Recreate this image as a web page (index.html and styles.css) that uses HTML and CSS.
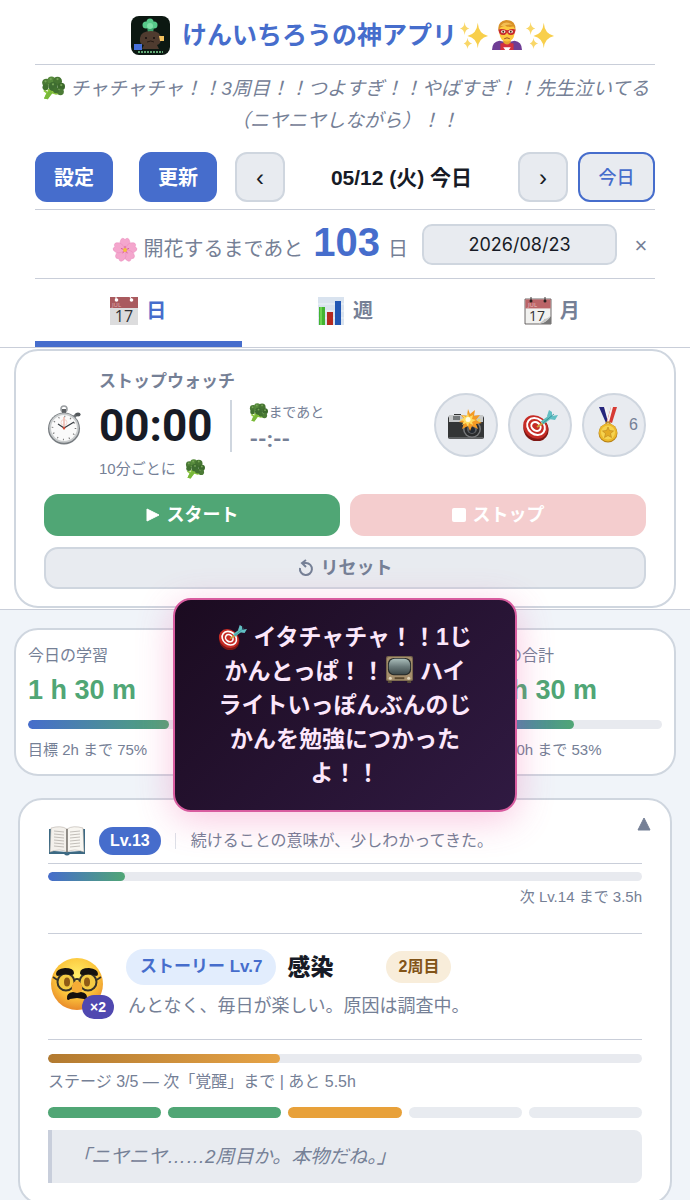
FILE: index.html
```html
<!DOCTYPE html>
<html lang="ja">
<head>
<meta charset="utf-8">
<meta name="viewport" content="width=device-width, initial-scale=1">
<title>けんいちろうの神アプリ</title>
<link rel="stylesheet" href="styles.css">
</head>
<body>
<svg class="defs" aria-hidden="true">
  <defs>
    <radialGradient id="g-face" cx=".5" cy=".35" r=".65"><stop offset="0" stop-color="#fff06a"/><stop offset=".6" stop-color="#fcc63c"/><stop offset="1" stop-color="#e8892a"/></radialGradient>
    <linearGradient id="g-screen" x1="0" y1="0" x2="0" y2="1"><stop offset="0" stop-color="#a9bcb9"/><stop offset=".5" stop-color="#6b7b7b"/><stop offset="1" stop-color="#3b4748"/></linearGradient>
    <symbol id="broccoli" viewBox="0 0 32 32">
      <path d="M9 17 20 18 25 24 20 25 14 23 9 31 4 30 7 23 3 20 5 18 9 21Z" fill="#8cc63f"/>
      <path d="m7 24 5-5 4 3-7 9-5-1z" fill="#79b93a"/>
      <circle cx="7" cy="9" r="5.500" fill="#4a7a35"/><circle cx="14" cy="6" r="5.500" fill="#568a3c"/><circle cx="22" cy="7" r="6" fill="#467532"/>
      <circle cx="27" cy="14" r="5" fill="#3c692c"/><circle cx="26" cy="21" r="4.500" fill="#4b7b36"/><circle cx="16" cy="14" r="6" fill="#3e6d31"/><circle cx="6" cy="15" r="4" fill="#41722f"/><circle cx="20" cy="19" r="4" fill="#427230"/>
      <g fill="#76a556"><circle cx="6" cy="7" r="1.500"/><circle cx="13" cy="4" r="1.500"/><circle cx="22" cy="4" r="1.500"/><circle cx="16" cy="11" r="1.500"/><circle cx="27" cy="12" r="1.500"/><circle cx="24" cy="18" r="1"/><circle cx="10" cy="12" r="1"/></g>
    </symbol>
    <symbol id="sparkles" viewBox="0 0 32 32">
      <path d="M20 3q1 12 11 14-10 2-11 13-1-11-11-13 10-2 11-14z" fill="#f8cf4b"/>
      <path d="M6 2q.5 6 5 7-4.500 1-5 7-.5-6-5-7 4.500-1 5-7zM9 19q.5 5 5 6-4.500 1-5 6-.5-5-4-6 3.500-1 4-6z" fill="#f9d768"/>
    </symbol>
    <symbol id="hero" viewBox="0 0 32 32">
      <path d="M0 32q0-9 8-10l8 2 8-2q8 1 8 10z" fill="#6f3d94"/>
      <path d="M9 32V25l7-1 7 1v7z" fill="#d3323e"/><path d="M12 29h8l-2 3h-4z" fill="#fff"/>
      <path d="M12 18h8v6q-4 4-8 0z" fill="#e6a52d"/>
      <path d="M8 9q0-6 8-6t8 6v6q-1 8-8 8t-8-8z" fill="#fdc93f"/>
      <path d="M7 12Q5 2 15 0q11 0 10 12l-2-5q-6 1-9-1-4 1-5 2z" fill="#d99227"/><path d="M9 6q5-6 13-1-7-1-9 2z" fill="#f3bf54"/>
      <path d="M7 10q4-1 9 1 5-2 9-1 0 6-5 6-3 0-4-3-1 3-4 3-5 0-5-6z" fill="#c8292f"/>
      <ellipse cx="12" cy="12.500" rx="2.400" ry="1.500" fill="#f4f0dc"/><ellipse cx="20" cy="12.500" rx="2.400" ry="1.500" fill="#f4f0dc"/><circle cx="12" cy="12.500" r="1" fill="#4b2b18"/><circle cx="20" cy="12.500" r="1" fill="#4b2b18"/>
      <path d="M13 20q3-2 6 0" stroke="#94472a" fill="none"/>
    </symbol>
    <symbol id="blossom" viewBox="0 0 32 32">
      <g fill="#f4a6cd" stroke="#e98abb" stroke-width=".6"><path id="petal" d="M16 16Q7 10 11 3q2-3 5 0 3-3 5 0 4 7-5 13z"/><use href="#petal" transform="rotate(72 16 16)"/><use href="#petal" transform="rotate(144 16 16)"/><use href="#petal" transform="rotate(216 16 16)"/><use href="#petal" transform="rotate(288 16 16)"/></g>
      <g stroke="#cf4d86" stroke-width="1"><path d="M16 16v-5M16 16l5-2M16 16l3 4M16 16l-3 4M16 16l-5-2"/></g><circle cx="16" cy="16" r="2.500" fill="#f3c03c"/>
    </symbol>
    <symbol id="calendar" viewBox="0 0 28 28">
      <path d="M0 0h28v28H0z" fill="#dcdcdd"/><path d="M0 0h28v11H0z" fill="#a95a5e"/>
      <circle cx="6.500" cy="3" r="1.800" fill="#fff"/><circle cx="21.500" cy="3" r="1.800" fill="#fff"/><path d="M6 0v3M20 0l2 3" stroke="#fff"/>
      <text x="2" y="10" font-size="6" fill="#e2b5b5" class="cal-text">JUL</text><text x="14" y="25" font-size="16" text-anchor="middle" fill="#303236" class="cal-text">17</text>
    </symbol>
    <symbol id="tearoff" viewBox="0 0 28 28">
      <path d="M1 2h26v25H1z" fill="#f1f1ef" stroke="#4a4444" stroke-width=".8"/><path d="M1.400 2.400h25.200v9H1.400z" fill="#bb6467"/>
      <path d="M7 0v4M21 0v4" stroke="#3a3535" stroke-width="1"/><circle cx="7" cy="4" r="1.500" fill="#29201f"/><circle cx="21" cy="4" r="1.500" fill="#29201f"/>
      <text x="4" y="10" font-size="6" fill="#e8c3c1" class="cal-text">JUL</text><text x="13" y="24" font-size="14" text-anchor="middle" fill="#333" class="cal-text">17</text>
      <path d="M15 27q7-1 12-8v8z" fill="#777"/><path d="M14 27q7-4 6-5 4 0 7-4-2 7-13 9z" fill="#c6c6c4"/>
    </symbol>
    <symbol id="chart" viewBox="0 0 28 28">
      <path d="M1 0h26v28H1z" fill="#d9e3ef"/><path d="M1 7h26M1 14h26M1 21h26" stroke="#eef3f8"/>
      <path d="M2 10h6v18H2z" fill="#43b431"/><path d="M10 15h6v13h-6z" fill="#b52a20"/><path d="M18 4h6v24h-6z" fill="#2257b4"/><path d="M3 10h2v18H3z" fill="#6bd24f"/>
    </symbol>
    <symbol id="stopwatch" viewBox="0 0 34 40">
      <circle cx="17" cy="4" r="3" fill="none" stroke="#9b9fa2" stroke-width="1.600"/><path d="M15 4h4v6h-4z" fill="#5e6265"/>
      <path d="m27 12 3-3" stroke="#6c7174" stroke-width="3"/><ellipse cx="31" cy="9.500" rx="2.600" ry="2" fill="#53585b"/>
      <circle cx="17" cy="23.500" r="16" fill="#777c80"/><circle cx="17" cy="23" r="14.800" fill="#c9cccd"/><circle cx="17" cy="23" r="13" fill="#fafafa"/>
      <circle cx="17" cy="23" r="11.500" fill="none" stroke="#777" stroke-width="1.600" stroke-dasharray="1 5.020"/>
      <path d="M17 25V12" stroke="#e99484" stroke-width="1"/><circle cx="17" cy="17.500" r="3" fill="none" stroke="#ecc5ba" stroke-width=".7"/>
      <path d="m11 19 6 4 10-6" stroke="#353b40" stroke-width="1.200" fill="none"/><circle cx="17" cy="23" r="1.300" fill="#cf4c36"/>
    </symbol>
    <symbol id="camera" viewBox="0 0 36 32">
      <path d="M1 7h5V5h7v2h21q2 0 2 2v19q0 2-2 2H2q-2 0-2-2V9z" fill="#333536"/><path d="M1 6h34v7H1z" fill="#c6c8c9"/><path d="M5 7h7v4H5z" fill="#737779"/><path d="M1 29h34" stroke="#898c8e"/>
      <circle cx="24" cy="20" r="9" fill="#77797b"/><circle cx="24" cy="20" r="7.500" fill="#292b2d"/><circle cx="24" cy="20" r="5" fill="#5c5f63"/><circle cx="24" cy="21" r="3" fill="#222831"/>
      <path d="m20 0 2 5 5-4-1 6 6-1-4 5 6 3-6 1 2 5-6-3-2 5-2-5-6 3 2-6-5-1 5-3-3-4 6 1z" fill="#f39a24"/><path d="m20 4 1 4 4-2-1 4 4 1-4 2 1 3-4-2-1 4-2-4-4 2 2-4-4-1 4-2-2-3 4 2z" fill="#ffdc60"/><circle cx="20" cy="10.500" r="2.500" fill="#fffce1"/>
      <circle cx="31" cy="11" r="1.500" fill="#eed25a"/>
    </symbol>
    <symbol id="target" viewBox="0 0 36 32">
      <ellipse cx="14" cy="20" rx="13" ry="12" fill="#7f1714" transform="rotate(38 14 20)"/><ellipse cx="13.500" cy="18" rx="13" ry="11" fill="#c62c26" transform="rotate(38 13.500 18)"/>
      <ellipse cx="14" cy="17.500" rx="9.500" ry="7.800" fill="none" stroke="#fff" stroke-width="2" transform="rotate(38 14 17.500)"/>
      <ellipse cx="14" cy="17.500" rx="5" ry="4" fill="none" stroke="#fff" stroke-width="2" transform="rotate(38 14 17.500)"/>
      <path d="m15 18 6-4" stroke="#cda338" stroke-width="2"/><path d="m20 14 8-6" stroke="#5fbcb9" stroke-width="4"/><path d="m25 7 2-6 3 2v4l6-1-3 5-6-1z" fill="#62bfc4"/><path d="m21 14 11-9" stroke="#2c8c94" stroke-width=".8"/>
    </symbol>
    <symbol id="medal" viewBox="0 0 24 36">
      <path d="M3 0h6l5 14-4 2z" fill="#25257c"/><path d="M8 0h2l5 15h-3z" fill="#f5f2f2"/><path d="M21 0h-6l-4 14 5 2z" fill="#d63b34"/><path d="M17 0h-2l-4 15h2z" fill="#f5f2f2"/>
      <circle cx="12" cy="17" r="2" fill="none" stroke="#bc8727" stroke-width="1.500"/><circle cx="12" cy="26" r="9.500" fill="#b78117"/><circle cx="12" cy="25.500" r="9" fill="#ebb82b"/><circle cx="12" cy="25.500" r="7" fill="#f6d34f"/>
      <path d="m12 20 1.500 3.500 4 .5-3 2.500 1 4L12 28.500 8.500 30.500l1-4-3-2.500 4-.5z" fill="#e4ab24" stroke="#bb8420" stroke-width=".6"/>
    </symbol>
    <symbol id="tv" viewBox="0 0 30 30">
      <rect x="1" y="1" width="28" height="26" rx="2" fill="#74634a"/><rect x="2" y="2" width="26" height="24" rx="2" fill="#a58e6c"/><path d="M3 27h4v2H3zM23 27h4v2h-4z" fill="#554936"/>
      <rect x="3" y="3" width="24" height="18" rx="6" fill="#272b29"/><rect x="4" y="4" width="22" height="16" rx="6" fill="url(#g-screen)"/>
      <circle cx="5.500" cy="24" r="1.600" fill="#e3d7bb"/><circle cx="24.500" cy="24" r="1.600" fill="#e3d7bb"/><path d="M10 24h10" stroke="#59482f" stroke-width="2"/>
    </symbol>
    <symbol id="book" viewBox="0 0 36 30">
      <path d="M0 3h3l2 22 13 1 13-1 2-22h3v25H21q-3 3-6 0H0z" fill="#3c6983"/>
      <path d="M2 2q10-3 16 1v23q-7-4-17 0z" fill="#f3f0eb" stroke="#aaa39a" stroke-width=".5"/><path d="M34 2q-10-3-16 1v23q7-4 17 0z" fill="#f8f6f1" stroke="#aaa39a" stroke-width=".5"/>
      <path d="M18 3v23" stroke="#77736e" stroke-width="1.500"/><g stroke="#aaa6a1" stroke-width=".7" fill="none"><path d="m5 5 10 1M5 8l10 1M5 11l10 1M5 14l10 1M5 17l10 1M5 20l10 1M31 5 21 6M31 8 21 9M31 11l-10 1M31 14l-10 1M31 17l-10 1M31 20l-10 1"/></g>
    </symbol>
    <symbol id="disguise" viewBox="0 0 54 54">
      <circle cx="27" cy="27" r="26" fill="url(#g-face)"/>
      <g fill="#f4cb43" stroke="#37332a" stroke-width="2"><circle cx="16" cy="25" r="8.500"/><circle cx="38" cy="25" r="8.500"/></g><path d="M24.500 23q2.500-2 5 0M7.500 23 3 20M46.500 23l4.500-3" stroke="#37332a" stroke-width="1.800" fill="none"/>
      <ellipse cx="17" cy="25" rx="3" ry="4.500" fill="#8e5a16"/><ellipse cx="37" cy="25" rx="3" ry="4.500" fill="#8e5a16"/>
      <path d="M6 17q0-5 9-6 9 0 9 5 0 2-3 2-8-2-13 1-2 0-2-2zM48 17q0-5-9-6-9 0-9 5 0 2 3 2 8-2 13 1 2 0 2-2z" fill="#15120f"/>
      <path d="M22 34q-1-10 5-10t5 10q-5 4-10 0z" fill="#f5ac35"/>
      <path d="M17 42q-1-6 6-7l4 1 4-1q7 1 6 7-1 2-3 0l-7-1-7 1q-2 2-3 0z" fill="#15100e"/>
    </symbol>
    <symbol id="app-logo" viewBox="0 0 39 39">
      <rect width="39" height="39" rx="8" fill="#0c1812"/><path d="M16 11h7l-1 6h-5z" fill="#3aa06b"/><g fill="#57c98a"><circle cx="15" cy="9" r="3.500"/><circle cx="19" cy="6" r="3.500"/><circle cx="23" cy="9" r="3.500"/></g><circle cx="19" cy="10" r="3" fill="#7fe0a8"/>
      <path d="M9 22q1-7 11-7 10 0 10 8 0 5-4 6l2 4H11l2-4q-5-1-4-7z" fill="#4f3b2f"/><circle cx="15" cy="22" r="1" fill="#151010"/><circle cx="23" cy="22" r="1" fill="#151010"/><path d="M16 26q4-2 7 0" stroke="#251a15" fill="none"/>
      <path d="M28 20h5v5h-4z" fill="#f3c260"/><path d="M3 28h8v6H3z" fill="#4770db"/><path d="M7 36h25" stroke="#61a774" stroke-width="2" stroke-dasharray="2 1"/>
    </symbol>
  </defs>
</svg>

<header class="header">
  <div class="brand">
    <svg class="logo" aria-hidden="true"><use href="#app-logo"/></svg>
    <h1 class="brand-name">けんいちろうの神アプリ</h1>
    <span class="brand-emoji" aria-hidden="true"><svg><use href="#sparkles"/></svg><svg><use href="#hero"/></svg><svg><use href="#sparkles"/></svg></span>
  </div>
  <p class="cheer"><svg class="cheer-icon" aria-hidden="true"><use href="#broccoli"/></svg> チャチャチャ！！3周目！！つよすぎ！！やばすぎ！！先生泣いてる<br>（ニヤニヤしながら）！！</p>
  <nav class="date-nav">
    <button class="btn primary">設定</button>
    <button class="btn primary">更新</button>
    <button class="btn step" aria-label="前の日">‹</button>
    <strong class="date">05/12 (火) 今日</strong>
    <button class="btn step" aria-label="次の日">›</button>
    <button class="btn today">今日</button>
  </nav>
  <div class="countdown">
    <label class="count-label" for="goal-date"><svg class="count-icon" aria-hidden="true"><use href="#blossom"/></svg><span>開花するまであと</span><b class="days">103</b><span>日</span></label>
    <input class="goal-date" id="goal-date" type="text" value="2026/08/23">
    <button class="clear" aria-label="日付を消す">×</button>
  </div>
  <nav class="tabs">
    <button class="tab active"><svg aria-hidden="true"><use href="#calendar"/></svg>日</button>
    <button class="tab"><svg aria-hidden="true"><use href="#chart"/></svg>週</button>
    <button class="tab"><svg aria-hidden="true"><use href="#tearoff"/></svg>月</button>
  </nav>
</header>

<section class="timer-area">
  <div class="card timer">
    <div class="timer-top">
      <svg class="watch" aria-hidden="true"><use href="#stopwatch"/></svg>
      <div class="clock">
        <h2 class="timer-title">ストップウォッチ</h2>
        <div class="time-row">
          <span class="time">00:00</span>
          <div class="next"><span class="next-label"><svg aria-hidden="true"><use href="#broccoli"/></svg>まであと</span><span class="next-time">--:--</span></div>
        </div>
        <p class="interval">10分ごとに <svg aria-hidden="true"><use href="#broccoli"/></svg></p>
      </div>
      <div class="rounds">
        <button class="round" aria-label="カメラ"><svg class="wide-icon"><use href="#camera"/></svg></button>
        <button class="round" aria-label="目標"><svg class="wide-icon"><use href="#target"/></svg></button>
        <button class="round medals" aria-label="メダル"><svg class="medal-icon"><use href="#medal"/></svg><span>6</span></button>
      </div>
    </div>
    <div class="timer-buttons">
      <button class="action start"><svg viewBox="0 0 14 14" aria-hidden="true"><path d="M1 1v12l12-6z" fill="currentColor" stroke="currentColor" stroke-linejoin="round"/></svg>スタート</button>
      <button class="action stop" disabled><svg viewBox="0 0 14 14" aria-hidden="true"><rect width="14" height="14" rx="2" fill="currentColor"/></svg>ストップ</button>
      <button class="action reset"><svg viewBox="0 0 16 18" aria-hidden="true"><path d="M2 9a6 6 0 1 0 6-5H4M8 1 4 4l4 4" fill="none" stroke="currentColor" stroke-width="2"/></svg>リセット</button>
    </div>
  </div>
</section>

<main class="main">
  <section class="stats">
    <article class="card stat">
      <h3 class="stat-label">今日の学習</h3>
      <p class="stat-value">1 h 30 m</p>
      <div class="track"><div class="fill" style="width:75%"></div></div>
      <p class="stat-note">目標 2h まで 75%</p>
    </article>
    <article class="card stat"></article>
    <article class="card stat">
      <h3 class="stat-label">今月の合計</h3>
      <p class="stat-value">10 h 30 m</p>
      <div class="track"><div class="fill" style="width:53%"></div></div>
      <p class="stat-note">目標 20h まで 53%</p>
    </article>
  </section>

  <section class="card level">
    <button class="collapse" aria-label="閉じる"><svg viewBox="0 0 14 14"><path d="M7 1 13 13H1z" fill="currentColor" stroke="currentColor" stroke-linejoin="round"/></svg></button>
    <div class="level-head">
      <svg class="book" aria-hidden="true"><use href="#book"/></svg>
      <span class="level-pill">Lv.13</span>
      <span class="level-text">続けることの意味が、少しわかってきた。</span>
    </div>
    <div class="track level-track"><div class="fill" style="width:13%"></div></div>
    <p class="level-next">次 Lv.14 まで 3.5h</p>
    <div class="story">
      <div class="avatar"><svg aria-hidden="true"><use href="#disguise"/></svg><span class="times">×2</span></div>
      <div class="story-body">
        <div class="story-head"><span class="story-pill">ストーリー Lv.7</span><strong class="story-name">感染</strong><span class="lap">2周目</span></div>
        <p class="story-text">んとなく、毎日が楽しい。原因は調査中。</p>
      </div>
    </div>
    <div class="track stage-track"><div class="fill amber" style="width:39%"></div></div>
    <p class="stage-text">ステージ 3/5 — 次「覚醒」まで | あと 5.5h</p>
    <div class="stages"><i class="done"></i><i class="done"></i><i class="current"></i><i></i><i></i></div>
    <blockquote class="saying">「ニヤニヤ……2周目か。本物だね。」</blockquote>
  </section>
</main>

<div class="toast" role="status"><svg class="toast-target" aria-hidden="true"><use href="#target"/></svg> イタチャチャ！！1じ<br>かんとっぱ！！<svg class="toast-tv" aria-hidden="true"><use href="#tv"/></svg> ハイ<br>ライトいっぽんぶんのじ<br>かんを勉強につかった<br>よ！！</div>
</body>
</html>
```

FILE: styles.css
```css
:root {
  --blue: #466dcc;
  --green: #50a675;
  --ink: #171b26;
  --muted: #758096;
  --line: #c9ced9;
  --edge: #cfd6df;
  --soft: #e8ebf0;
}

* { box-sizing: border-box; }

body {
  position: relative;
  margin: 0;
  background: #f0f4f9;
  color: var(--ink);
  font: 16px/24px "Liberation Sans", "Noto Sans CJK JP", sans-serif;
}

h1, h2, h3, p, blockquote { margin: 0; }
svg { display: block; flex: none; }
button, input { font: inherit; margin: 0; padding: 0; }
button { cursor: pointer; }
.defs { position: absolute; width: 0; height: 0; }
.cal-text { font-family: "Open Sans", sans-serif; font-weight: normal; }

.card {
  background: #fff;
  border: 2px solid var(--edge);
  border-radius: 24px;
}

/* Header */
.header {
  padding: 0 35px;
  background: #fff;
  border-bottom: 1px solid var(--line);
}
.brand {
  display: flex;
  align-items: center;
  justify-content: center;
  padding: 6px 4px 0 0;
  height: 65px;
  border-bottom: 1px solid var(--line);
}
.logo { width: 39px; height: 39px; }
.brand-name {
  margin-left: 12px;
  color: var(--blue);
  font-size: 25px;
  line-height: 36px;
}
.brand-emoji { display: flex; gap: 3px; margin-left: 2px; }
.brand-emoji svg { width: 30px; height: 30px; }
.cheer {
  padding: 8px 0 15px;
  color: var(--muted);
  font-size: 19px;
  font-style: italic;
  line-height: 32px;
  text-align: center;
  white-space: nowrap;
}
.cheer-icon { display: inline-block; width: 24px; height: 24px; vertical-align: -5px; }
.date-nav {
  display: flex;
  align-items: center;
  padding-bottom: 7px;
  border-bottom: 1px solid var(--line);
}
.btn {
  height: 50px;
  padding-top: 2px;
  border: 2px solid var(--edge);
  border-radius: 12px;
  background: var(--soft);
  font-size: 20px;
  font-weight: 500;
}
.btn.primary {
  width: 78px;
  margin-right: 26px;
  border: 0;
  background: var(--blue);
  color: #fff;
  font-weight: bold;
}
.btn.primary + .btn.primary { margin-right: 18px; }
.step { width: 50px; color: var(--ink); font-size: 24px; }
.date { flex: 1; padding-top: 2px; font-size: 21px; text-align: center; }
.btn.today {
  width: 77px;
  margin-left: 10px;
  border-color: var(--blue);
  color: var(--blue);
  font-size: 18px;
}
.countdown {
  display: flex;
  align-items: center;
  justify-content: flex-end;
  height: 69px;
  border-bottom: 1px solid var(--line);
}
.count-label {
  display: flex;
  align-items: baseline;
  padding-top: 3px;
  color: var(--muted);
  font-size: 20px;
  line-height: 40px;
}
.count-icon { align-self: center; width: 26px; height: 26px; margin: 8px 5px 0 0; }
.days { margin: 0 8px 0 10px; color: var(--blue); font-size: 40px; }
.goal-date {
  width: 195px;
  height: 41px;
  margin-left: 14px;
  border: 2px solid var(--edge);
  border-radius: 10px;
  background: var(--soft);
  color: var(--ink);
  font-family: Inter, sans-serif;
  font-size: 18px;
  text-align: center;
}
.clear {
  width: 28px;
  margin-left: 10px;
  padding-top: 3px;
  border: 0;
  background: none;
  color: var(--muted);
  font-size: 22px;
}
.tabs { display: flex; }
.tab {
  display: flex;
  flex: 1;
  align-items: center;
  justify-content: center;
  gap: 8px;
  height: 68px;
  padding-top: 2px;
  border: 0;
  border-bottom: 6px solid transparent;
  background: none;
  color: var(--muted);
  font-size: 20px;
  font-weight: bold;
}
.tab svg { width: 28px; height: 28px; }
.tab.active { border-color: var(--blue); color: var(--blue); }

/* Stopwatch */
.timer-area {
  padding: 1px 14px;
  background: #fff;
  border-bottom: 1px solid var(--line);
}
.timer { padding: 19px 28px 17px; }
.timer-top { display: flex; align-items: center; }
.watch { width: 34px; height: 40px; margin: 0 18px 0 3px; }
.timer-title { color: var(--muted); font-size: 17px; line-height: 24px; }
.time-row { display: flex; align-items: center; height: 64px; }
.time { font: bold 44px/64px Roboto, sans-serif; }
.next {
  display: flex;
  flex-direction: column;
  gap: 4px;
  margin-left: 18px;
  padding-left: 17px;
  border-left: 2px solid var(--edge);
  color: var(--muted);
}
.next-label { display: flex; align-items: center; font-size: 14px; }
.next-label svg { width: 19px; height: 19px; }
.next-time { font: bold 22px/24px Roboto, sans-serif; }
.interval { display: flex; align-items: center; gap: 9px; color: var(--muted); font-size: 15px; line-height: 22px; }
.interval svg { width: 20px; height: 20px; }
.rounds { display: flex; gap: 10px; margin-left: auto; }
.round {
  display: flex;
  align-items: center;
  justify-content: center;
  width: 64px;
  height: 64px;
  border: 2px solid var(--edge);
  border-radius: 50%;
  background: var(--soft);
  color: var(--muted);
  font-size: 16px;
}
.wide-icon { width: 36px; height: 32px; }
.medals { gap: 9px; padding-left: 6px; }
.medal-icon { width: 24px; height: 36px; }
.timer-buttons {
  display: grid;
  grid-template-columns: 1fr 1fr;
  gap: 11px 10px;
  margin-top: 14px;
}
.action {
  display: flex;
  align-items: center;
  justify-content: center;
  gap: 7px;
  height: 42px;
  border: 0;
  border-radius: 14px;
  color: #fff;
  font-size: 18px;
  font-weight: bold;
}
.action svg { width: 14px; height: 14px; }
.start { background: var(--green); }
.stop { background: #f4cdce; }
.reset {
  grid-column: 1 / -1;
  border: 2px solid var(--edge);
  background: var(--soft);
  color: var(--muted);
}
.reset svg { width: 16px; height: 18px; }

/* Study totals */
.main { padding: 18px 14px 16px; }
.stats { display: grid; grid-template-columns: repeat(3, 1fr); gap: 7px; }
.stat { padding: 14px 12px 13px; }
.stat-label { color: var(--muted); font-size: 16px; font-weight: normal; }
.stat-value { margin-top: 4px; color: var(--green); font-size: 27px; font-weight: bold; line-height: 36px; }
.stat .track { margin-top: 12px; }
.stat-note { margin-top: 10px; color: var(--muted); font-size: 15px; line-height: 22px; white-space: nowrap; }
.track { height: 9px; overflow: hidden; border-radius: 5px; background: #e8eaef; }
.fill { height: 100%; border-radius: 5px; background: linear-gradient(90deg, var(--blue), var(--green)); }
.fill.amber { background: linear-gradient(90deg, #b27a30, #e6a346); }

/* Level */
.level { position: relative; margin: 22px 4px 0; padding: 19px 28px 20px; }
.collapse {
  position: absolute;
  top: 17px;
  right: 19px;
  border: 0;
  background: none;
  color: var(--muted);
}
.collapse svg { width: 14px; height: 14px; }
.level-head {
  display: flex;
  align-items: center;
  height: 45px;
  border-bottom: 1px solid var(--line);
}
.book { width: 36px; height: 30px; margin: 0 14px 0 1px; }
.level-pill {
  padding: 0 11px;
  border-radius: 14px;
  background: var(--blue);
  color: #fff;
  font-size: 16px;
  font-weight: bold;
  line-height: 28px;
}
.level-text {
  margin-left: 14px;
  padding-left: 15px;
  border-left: 1px solid #dde1e8;
  color: var(--muted);
  line-height: 16px;
  white-space: nowrap;
}
.level-track { margin-top: 8px; }
.level-next { margin-top: 4px; color: var(--muted); font-size: 15px; text-align: right; }
.story {
  display: flex;
  margin-top: 24px;
  padding: 15px 0 17px;
  border: solid var(--line);
  border-width: 1px 0;
}
.avatar { position: relative; width: 78px; padding: 8px 0 0 2px; }
.avatar svg { width: 54px; height: 54px; }
.times {
  position: absolute;
  top: 46px;
  left: 34px;
  padding: 0 8px;
  border-radius: 12px;
  background: #5048b0;
  color: #fff;
  font-size: 14px;
  font-weight: bold;
}
.story-body { flex: 1; }
.story-head { display: flex; align-items: center; height: 36px; }
.story-pill {
  padding: 0 14px;
  border-radius: 18px;
  background: #e2edfd;
  color: var(--blue);
  font-size: 17px;
  font-weight: bold;
  line-height: 36px;
}
.story-name { margin-left: 11px; font-size: 23px; font-weight: 900; }
.lap {
  margin-left: 53px;
  padding: 0 12px;
  border-radius: 16px;
  background: #f8edda;
  color: #825418;
  font-size: 16px;
  font-weight: bold;
  line-height: 32px;
}
.story-text { margin-top: 5px; padding-left: 2px; color: var(--muted); font-size: 18px; line-height: 32px; }
.stage-track { margin-top: 14px; }
.stage-text { margin-top: 7px; color: var(--muted); font-size: 16px; }
.stages { display: grid; grid-template-columns: repeat(5, 1fr); gap: 7px; margin-top: 13px; }
.stages i { height: 11px; border-radius: 6px; background: #e8ebf0; }
.stages .done { background: var(--green); }
.stages .current { background: #e8a13a; }
.saying {
  margin-top: 12px;
  padding: 0 20px;
  border-left: 4px solid #c8cedb;
  border-radius: 0 8px 8px 0;
  background: var(--soft);
  color: var(--muted);
  font-size: 19px;
  font-style: italic;
  line-height: 53px;
}

/* Floating message */
.toast {
  position: absolute;
  top: 598px;
  left: 50%;
  width: 344px;
  padding: 20px 0;
  transform: translateX(-50%);
  border: 2px solid #d85c9f;
  border-radius: 18px;
  background: linear-gradient(135deg, #1b0b20, #301a42);
  box-shadow: 0 8px 36px rgba(236, 72, 153, 0.3);
  color: #fce7fb;
  font-size: 23px;
  font-weight: bold;
  line-height: 34px;
  text-align: center;
  white-space: nowrap;
}
.toast svg { display: inline-block; vertical-align: -5px; }
.toast-target { width: 29px; height: 26px; }
.toast-tv { width: 29px; height: 29px; }
```
